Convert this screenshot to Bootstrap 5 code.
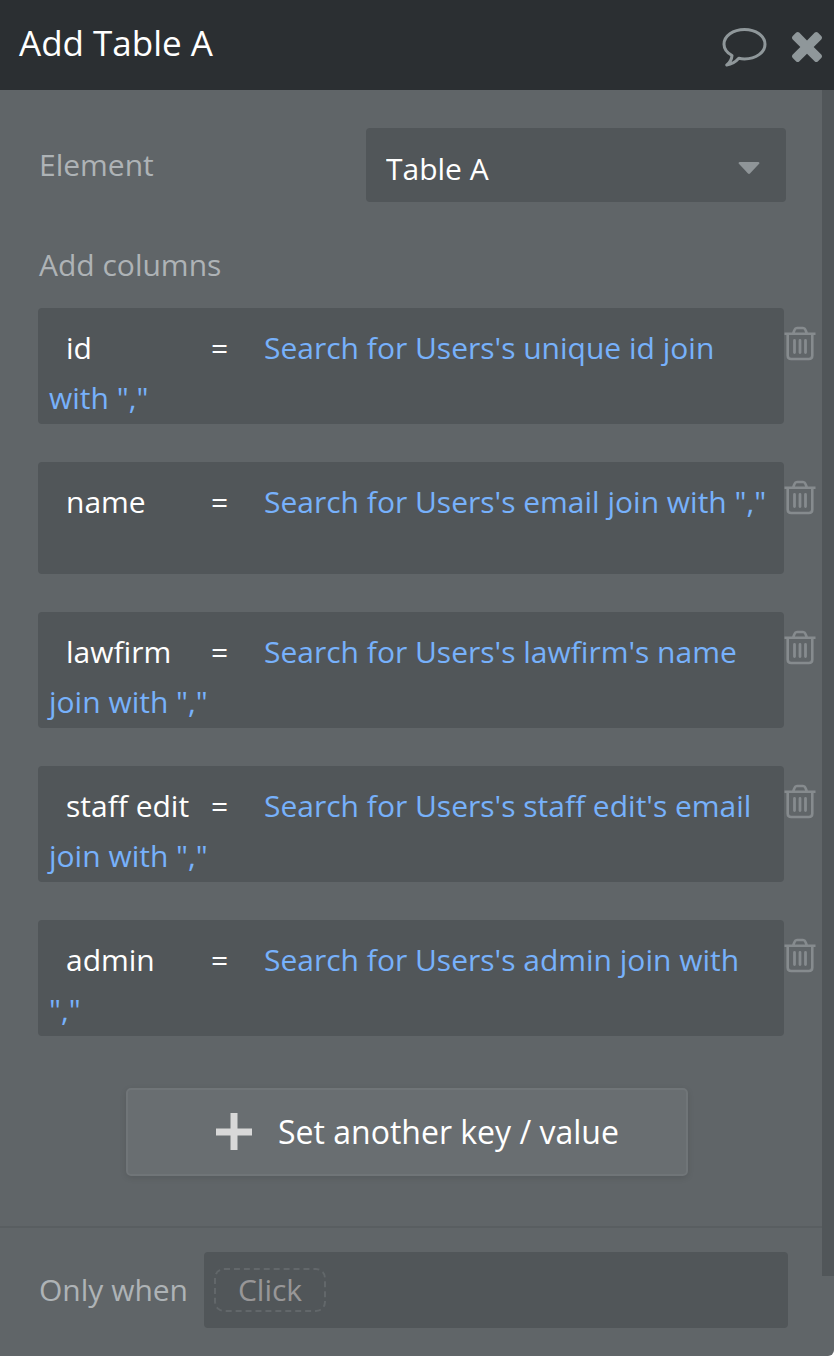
<!DOCTYPE html>
<html lang="en">
<head>
<meta charset="utf-8">
<meta name="viewport" content="width=device-width, initial-scale=1">
<title>Add Table A</title>
<link href="https://cdn.jsdelivr.net/npm/bootstrap@5.3.0/dist/css/bootstrap.min.css" rel="stylesheet">
<style>
  body { font-family: "Open Sans", "Noto Sans", sans-serif; font-size: 30px; line-height: 50px; color: #fff; background: #fff; }
  .panel { background: #606568; border-bottom-right-radius: 6px; overflow: hidden; }
  .panel-head { background: #2b2f32; height: 90px; padding: 0 11px 0 19px; }
  .panel-title { font-size: 35px; font-weight: 400; line-height: 50px; }
  .plain-btn { background: none; border: 0; padding: 0; line-height: 0; }
  .head-icons { gap: 24px; color: #8f979a; }
  .field-label { color: #aeb3b6; }
  .field-box { background-color: #515659; border-radius: 4px; }
  .element-row { padding: 38px 36px 0 39px; }
  .element-row .form-select {
    width: 420px; height: 74px; padding: 8px 64px 0 20px; border: 0; color: #fff; font-size: 30px; line-height: 50px;
    background: #515659 url("data:image/svg+xml,%3Csvg xmlns='http://www.w3.org/2000/svg' viewBox='0 0 22 12'%3E%3Cpath fill='%238f9598' d='M1.500 0h19q1.500.5.600 1.700L12 11.500q-1 .8-2 0L.9 1.700Q0 .5 1.500 0z'/%3E%3C/svg%3E") no-repeat right 26px top 34px / 22px 12px;
    border-radius: 4px;
  }
  .columns-head { padding: 38px 38px 18px 39px; }
  .pair-list { gap: 38px; padding: 0 6px 0 38px; }
  .pair-box { min-height: 112px; padding: 15px 10px 1px 11px; }
  .pair-key { width: 146px; padding: 0 0 0 17px; border: 0; background: none; color: #fff; line-height: 40px; height: 40px; outline: 0; }
  .pair-eq { display: inline-block; width: 35px; padding-left: 16px; margin-right: 34px; }
  .pair-value { color: #77b1fb; text-decoration: none; }
  .pair-trash { width: 32px; margin-top: 18px; color: #868b8e; }
  .add-wrap { padding: 52px 134px 50px 126px; }
  .add-btn { height: 88px; gap: 26px; padding: 0 62px 0 88px; font-size: 32px; color: #fff; background: #696e71; border: 2px solid #707578; border-radius: 5px; box-shadow: 0 2px 6px rgba(0,0,0,.1); }
  .condition-row { border-top: 2px solid #595e61; padding: 24px 34px 28px 39px; }
  .condition-label { width: 165px; }
  .condition-box { height: 76px; padding: 0 10px; }
  .click-btn { height: 44px; width: 112px; padding: 0; line-height: 40px; color: #989697; background: none; border: 2px dashed #62676a; border-radius: 10px; }
  .scroll-track { width: 12px; padding-bottom: 80px; }
  .scroll-thumb { background: #515659; }
</style>
</head>
<body>
<svg class="d-none" aria-hidden="true">
  <symbol id="trash" viewBox="0 0 32 36">
    <g fill="none" stroke="currentColor">
      <path stroke-width="2.600" d="M.5 7.700h31M3.700 8v21.500q0 3.500 3.500 3.500h17.600q3.500 0 3.500-3.500V8M9.300 7l1.300-3.300q.6-1.700 2.400-1.700h6q1.800 0 2.400 1.700L22.700 7"/>
      <path stroke-width="2.800" stroke-linecap="round" d="M10.500 14.500v12M16 14.500v12M21.500 14.500v12"/>
    </g>
  </symbol>
</svg>
<div class="panel min-vh-100 d-flex flex-column">
  <header class="panel-head d-flex align-items-center justify-content-between">
    <h1 class="panel-title mb-1">Add Table A</h1>
    <div class="head-icons d-flex align-items-center pt-1">
      <button class="plain-btn text-reset" type="button" aria-label="Comment">
        <svg width="46" height="40" viewBox="0 0 46 40"><path fill="none" stroke="currentColor" stroke-width="3" stroke-linejoin="round" d="M23.500 2.500C12 2.500 3 9 3 17.200c0 4.600 3 8.500 8 11.300-.4 4.500-2 7-5.200 9.500 5.500-.8 9-3.300 12-6.700 1.800.4 3.700.6 5.700.6C35 31.900 44 25.400 44 17.200S35 2.500 23.500 2.500z"/></svg>
      </button>
      <button class="plain-btn text-reset" type="button" aria-label="Close">
        <svg width="32" height="32" viewBox="0 0 32 32"><path fill="currentColor" d="M8.200 1.600 16 9.400l7.800-7.800q1.500-1.200 3 0l3.700 3.700q1.200 1.500 0 3L22.700 16l7.800 7.800q1.200 1.500 0 3l-3.700 3.700q-1.500 1.200-3 0L16 22.700l-7.800 7.800q-1.500 1.200-3 0l-3.700-3.700q-1.200-1.500 0-3L9.300 16 1.500 8.300q-1.200-1.500 0-3l3.700-3.700q1.500-1.200 3 0z"/></svg>
      </button>
    </div>
  </header>

  <div class="d-flex flex-grow-1">
    <main class="flex-grow-1">
      <div class="element-row d-flex align-items-center justify-content-between">
        <label class="field-label" for="element">Element</label>
        <select class="form-select" id="element"><option>Table A</option></select>
      </div>

      <div class="columns-head field-label">Add columns</div>

      <div class="pair-list d-flex flex-column">
        <div class="d-flex align-items-start">
          <div class="pair-box field-box flex-grow-1"><input class="pair-key" aria-label="Key" value="id"><span class="pair-eq">=</span><a class="pair-value" href="#">Search for Users's unique id join with ","</a></div>
          <button class="plain-btn pair-trash" type="button" aria-label="Delete"><svg width="32" height="36"><use href="#trash"/></svg></button>
        </div>
        <div class="d-flex align-items-start">
          <div class="pair-box field-box flex-grow-1"><input class="pair-key" aria-label="Key" value="name"><span class="pair-eq">=</span><a class="pair-value" href="#">Search for Users's email join with ","</a></div>
          <button class="plain-btn pair-trash" type="button" aria-label="Delete"><svg width="32" height="36"><use href="#trash"/></svg></button>
        </div>
        <div class="d-flex align-items-start">
          <div class="pair-box field-box flex-grow-1"><input class="pair-key" aria-label="Key" value="lawfirm"><span class="pair-eq">=</span><a class="pair-value" href="#">Search for Users's lawfirm's name join with ","</a></div>
          <button class="plain-btn pair-trash" type="button" aria-label="Delete"><svg width="32" height="36"><use href="#trash"/></svg></button>
        </div>
        <div class="d-flex align-items-start">
          <div class="pair-box field-box flex-grow-1"><input class="pair-key" aria-label="Key" value="staff edit"><span class="pair-eq">=</span><a class="pair-value" href="#">Search for Users's staff edit's email join with ","</a></div>
          <button class="plain-btn pair-trash" type="button" aria-label="Delete"><svg width="32" height="36"><use href="#trash"/></svg></button>
        </div>
        <div class="d-flex align-items-start">
          <div class="pair-box field-box flex-grow-1"><input class="pair-key" aria-label="Key" value="admin"><span class="pair-eq">=</span><a class="pair-value" href="#">Search for Users's admin join with ","</a></div>
          <button class="plain-btn pair-trash" type="button" aria-label="Delete"><svg width="32" height="36"><use href="#trash"/></svg></button>
        </div>
      </div>

      <div class="add-wrap">
        <button class="add-btn w-100 d-flex align-items-center" type="button">
          <svg class="flex-shrink-0" width="36" height="38" viewBox="0 0 36 38"><path fill="#d8d8d8" d="M14.500 0h7v15.500H36v7H21.500V37h-7V22.500H0v-7h14.500z"/></svg>
          <span class="text-nowrap">Set another key / value</span>
        </button>
      </div>

      <div class="condition-row d-flex align-items-center">
        <div class="condition-label field-label flex-shrink-0">Only when</div>
        <div class="condition-box field-box flex-grow-1 d-flex align-items-center">
          <button class="click-btn" type="button">Click</button>
        </div>
      </div>
    </main>
    <div class="scroll-track flex-shrink-0 d-flex"><div class="scroll-thumb w-100"></div></div>
  </div>
</div>
<script src="https://cdn.jsdelivr.net/npm/bootstrap@5.3.0/dist/js/bootstrap.bundle.min.js"></script>
</body>
</html>
